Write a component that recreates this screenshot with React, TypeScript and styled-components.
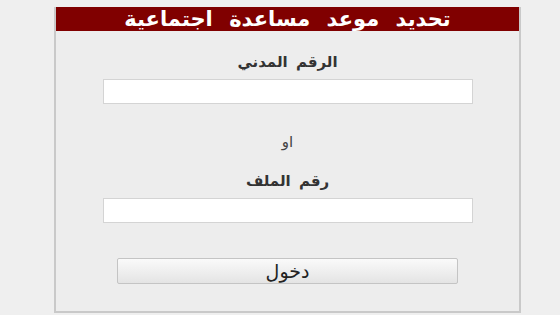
import styled, { createGlobalStyle } from 'styled-components'

const GlobalStyle = createGlobalStyle`
  html, body {
    margin: 0;
    padding: 0;
    background: #efefef;
  }
  body {
    font-family: "DejaVu Sans", "Noto Sans", sans-serif;
  }
`

function App() {
  return (
    <>
      <GlobalStyle />
      <Panel dir="rtl">
        <Header>تحديد موعد مساعدة اجتماعية</Header>
        <Form onSubmit={(e) => e.preventDefault()}>
          <Label htmlFor="civil">الرقم المدني</Label>
          <TextInput id="civil" type="text" />
          <Or>او</Or>
          <Label htmlFor="file">رقم الملف</Label>
          <TextInput id="file" type="text" />
          <SubmitButton type="submit">دخول</SubmitButton>
        </Form>
      </Panel>
    </>
  )
}

const Panel = styled.div`
  box-sizing: border-box;
  margin: 7px 0 0 54px;
  width: 467px;
  height: 306px;
  background: #ededed;
  border: 2px solid #c9c9c9;
  border-top: none;
  display: flex;
  flex-direction: column;
`

const Header = styled.div`
  height: 24px;
  background: #800000;
  color: #ffffff;
  font-size: 21px;
  font-weight: bold;
  line-height: 24px;
  text-align: center;
  word-spacing: 9px;
  overflow: hidden;
`

const Form = styled.form`
  display: flex;
  flex-direction: column;
  align-items: center;
  padding-top: 22px;
`

const Label = styled.label`
  font-size: 15px;
  font-weight: bold;
  color: #333333;
  line-height: 18px;
  margin-bottom: 8px;
  word-spacing: 3px;
`

const TextInput = styled.input`
  box-sizing: border-box;
  width: 370px;
  height: 25px;
  border: 1px solid #d4d4d4;
  background: #ffffff;
  outline: none;
  font-size: 13px;
`

const Or = styled.div`
  font-size: 15px;
  color: #444444;
  line-height: 18px;
  margin: 29px 0 21px;
`

const SubmitButton = styled.button`
  box-sizing: border-box;
  margin-top: 35px;
  width: 341px;
  height: 26px;
  border: 1px solid #c4c4c4;
  border-radius: 2px;
  background: linear-gradient(#fafafa, #e4e4e4);
  font-family: "DejaVu Sans", "Noto Sans", sans-serif;
  font-size: 19px;
  font-weight: normal;
  line-height: 22px;
  color: #222222;
  cursor: pointer;
`

export default App
